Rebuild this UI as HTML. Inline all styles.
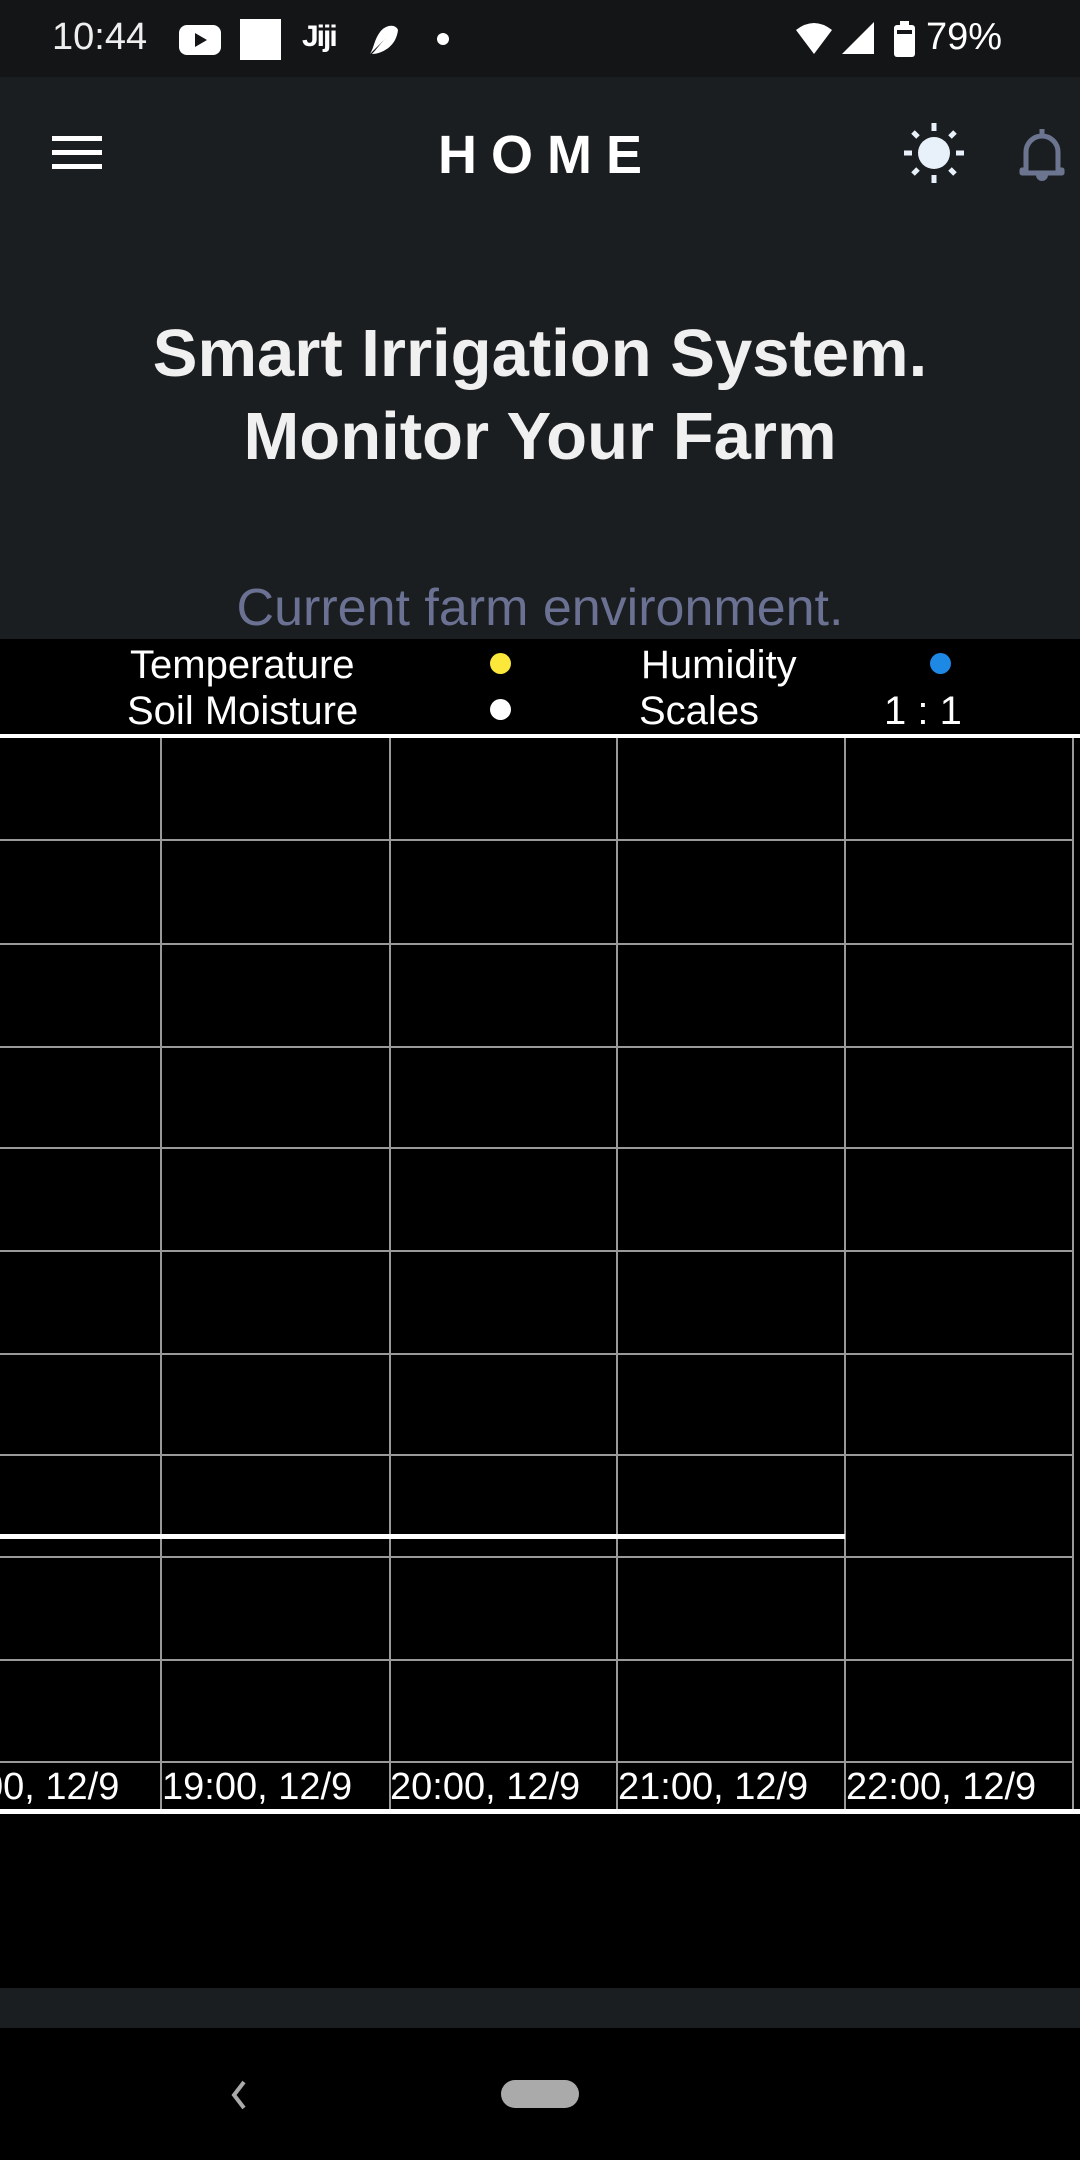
<!DOCTYPE html>
<html><head><meta charset="utf-8"><style>
*{margin:0;padding:0;box-sizing:border-box}
body{width:1080px;height:2160px;background:#000;position:relative;overflow:hidden;font-family:"Liberation Sans",sans-serif;color:#fff}
.abs{position:absolute}
</style></head><body>
<div class="abs" style="left:0;top:0;width:1080px;height:77px;background:#141517"></div>
<div class="abs" style="left:0;top:77px;width:1080px;height:562px;background:#1b1e20"></div>
<div class="abs" style="left:52px;top:16px;font-size:38px;color:#eee">10:44</div>
<svg class="abs" style="left:178px;top:24px" width="44" height="32"><rect x="1" y="1" width="42" height="30" rx="8" fill="#fff"/><path d="M17 9 L29 16 L17 23Z" fill="#141517"/></svg>
<div class="abs" style="left:240px;top:19px;width:41px;height:41px;background:#fff"></div>
<div class="abs" style="left:302px;top:20px;font-size:30px;font-weight:bold;letter-spacing:-2px">Jiji</div>
<svg class="abs" style="left:366px;top:22px" width="36" height="36"><path d="M4 32 C10 26 14 22 20 16 C14 22 10 28 6 32 C14 32 30 26 32 8 C30 2 20 2 14 10 C8 18 8 26 4 32Z" fill="#fff"/></svg>
<div class="abs" style="left:437px;top:33px;width:12px;height:12px;border-radius:50%;background:#fff"></div>
<svg class="abs" style="left:796px;top:20px" width="40" height="36"><path d="M0 10 Q18 -4 36 10 L18 34Z" fill="#fff"/></svg>
<svg class="abs" style="left:840px;top:20px" width="36" height="36"><path d="M34 2 L34 34 L2 34Z" fill="#fff"/></svg>
<svg class="abs" style="left:893px;top:20px" width="24" height="38"><rect x="1" y="5" width="21" height="32" rx="3" fill="#fff"/><rect x="7" y="1" width="9" height="5" fill="#fff"/><rect x="4" y="10" width="15" height="4" fill="#141517"/></svg>
<div class="abs" style="left:926px;top:16px;font-size:38px;color:#fff">79%</div>
<svg class="abs" style="left:52px;top:136px" width="52" height="36"><rect y="0" width="50" height="5" fill="#fff"/><rect y="14" width="50" height="5" fill="#fff"/><rect y="28" width="50" height="5" fill="#fff"/></svg>
<div class="abs" style="left:0;top:124px;width:1080px;text-align:center;font-size:54px;font-weight:bold;letter-spacing:14px;padding-left:14px">HOME</div>
<svg class="abs" style="left:902px;top:121px" width="64" height="64"><circle cx="32" cy="32" r="16" fill="#e8f0fa"/><g stroke="#e8f0fa" stroke-width="5"><path d="M32 2v8M32 54v8M2 32h8M54 32h8"/><path d="M11 11l5 5M48 48l5 5M53 11l-5 5M16 48l-5 5"/></g></svg>
<svg class="abs" style="left:1018px;top:126px" width="48" height="56"><path d="M24 3v6M8 44V26a16 16 0 0 1 32 0v18h4v3H4v-3z" fill="none" stroke="#6c7590" stroke-width="5" stroke-linejoin="round"/><path d="M18 49h12a6 6 0 0 1-12 0z" fill="#6c7590"/></svg>
<div class="abs" style="left:0;top:312px;width:1080px;text-align:center;font-size:67px;font-weight:bold;line-height:83px;color:#f0f0f0">Smart Irrigation System.<br>Monitor Your Farm</div>
<div class="abs" style="left:0;top:578px;width:1080px;text-align:center;font-size:52px;color:#6b7192">Current farm environment.</div>
<div class="abs" style="left:130px;top:643px;font-size:40px">Temperature</div>
<div class="abs" style="left:127px;top:689px;font-size:40px">Soil Moisture</div>
<div class="abs" style="left:641px;top:643px;font-size:40px">Humidity</div>
<div class="abs" style="left:639px;top:689px;font-size:40px">Scales</div>
<div class="abs" style="left:884px;top:689px;font-size:40px">1 : 1</div>
<div class="abs" style="left:490px;top:653px;width:21px;height:21px;border-radius:50%;background:#fce83a"></div>
<div class="abs" style="left:490px;top:699px;width:21px;height:21px;border-radius:50%;background:#fff"></div>
<div class="abs" style="left:930px;top:653px;width:21px;height:21px;border-radius:50%;background:#1e88e5"></div>
<svg class="abs" style="left:0;top:734px" width="1080" height="1080">
<rect x="0" y="0" width="1080" height="4" fill="#fff"/>
<g stroke="#999" stroke-width="2">
<path d="M161 4V1076M390 4V1076M617 4V1076M845 4V1076M1073 4V1076"/>
<path d="M0 106H1073M0 210H1073M0 313H1073M0 414H1073M0 517H1073M0 620H1073M0 721H1073M0 823H1073M0 926H1073M0 1028H1073"/>
</g>
<rect x="0" y="800" width="845" height="5" fill="#fff"/>
<rect x="0" y="1075" width="1080" height="5" fill="#fff"/>
<g font-family="Liberation Sans" font-size="38" fill="#fff">
<text x="-18" y="1065">00, 12/9</text>
<text x="162" y="1065">19:00, 12/9</text>
<text x="390" y="1065">20:00, 12/9</text>
<text x="618" y="1065">21:00, 12/9</text>
<text x="846" y="1065">22:00, 12/9</text>
</g>
</svg>
<div class="abs" style="left:0;top:1988px;width:1080px;height:40px;background:#1b1e20"></div>
<svg class="abs" style="left:226px;top:2078px" width="24" height="34"><path d="M18 4L8 17L18 30" fill="none" stroke="#aaa" stroke-width="4"/></svg>
<div class="abs" style="left:501px;top:2080px;width:78px;height:28px;border-radius:14px;background:#aaa"></div>
</body></html>
